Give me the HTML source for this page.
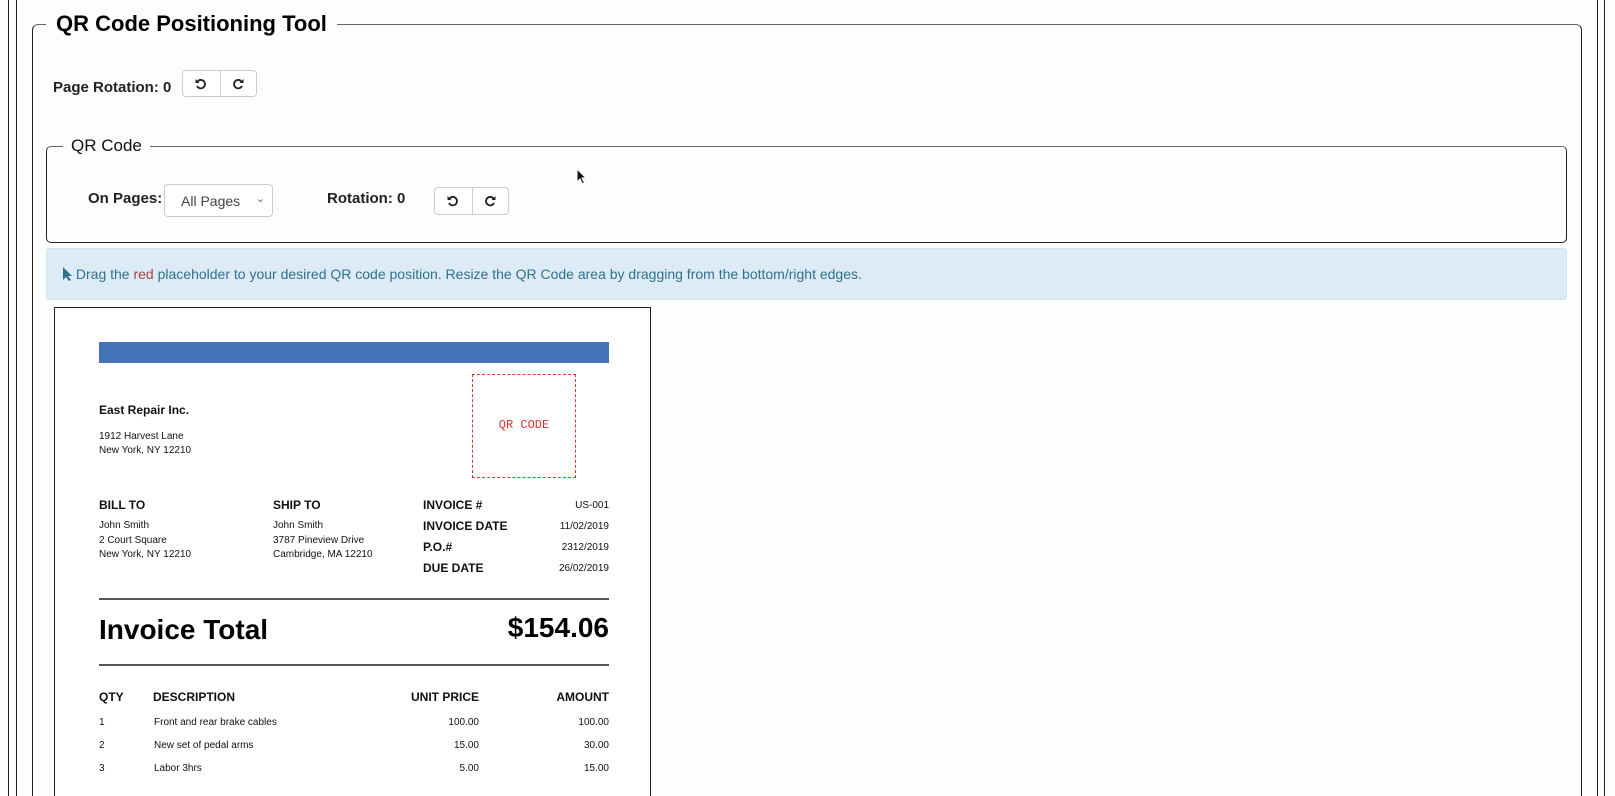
<!DOCTYPE html>
<html><head><meta charset="utf-8"><style>
*{box-sizing:border-box;margin:0;padding:0}
html,body{width:1615px;height:796px;overflow:hidden}
body{background:#fdfdfc;font-family:"Liberation Sans",Arial,sans-serif;color:#000}
#w{position:relative;width:1615px;height:796px;overflow:hidden}
.a{position:absolute}
.vl{position:absolute;top:0;height:796px;width:1px;background:#222}
.btns{position:absolute;display:flex;border:1px solid #ccc;border-radius:4px;background:#fff;overflow:hidden}
.btns div{width:37px;height:100%;display:flex;align-items:center;justify-content:center}
.btns div+div{border-left:1px solid #ccc}
.inv{font-size:10px;color:#111}
.b{font-weight:bold}
.r{text-align:right}
</style></head><body><div id="w">
<div class="vl" style="left:8px"></div><div class="vl" style="left:16px"></div>
<div class="vl" style="left:1597px"></div><div class="vl" style="left:1604px"></div>

<div class="a" style="left:32px;top:24px;width:1550px;height:772px;border:1px solid #222;border-bottom:none;border-top-color:#666;border-radius:6px 6px 0 0"></div>
<div class="a b" style="left:46px;top:10px;background:#fdfdfc;padding:0 10px;font-size:22px;line-height:28px">QR Code Positioning Tool</div>

<div class="a b" style="left:53px;top:79px;font-size:15px;color:#222">Page Rotation: 0</div>
<div class="btns" style="left:182px;top:70px;width:75px;height:27px">
<div><svg width="14" height="14" viewBox="0 0 14 14"><path d="M3.5 4.5A4.2 4.2 0 1 1 3 9" fill="none" stroke="#222" stroke-width="1.8"/><path d="M1.5 2v4h4z" fill="#222"/></svg></div>
<div><svg width="14" height="14" viewBox="0 0 14 14"><path d="M10.5 4.5A4.2 4.2 0 1 0 11 9" fill="none" stroke="#222" stroke-width="1.8"/><path d="M12.5 2v4h-4z" fill="#222"/></svg></div>
</div>

<div class="a" style="left:46px;top:146px;width:1521px;height:97px;border:1px solid #222;border-top-color:#666;border-radius:5px"></div>
<div class="a" style="left:63px;top:135px;background:#fdfdfc;padding:0 8px;font-size:17px;line-height:22px;color:#111">QR Code</div>
<div class="a b" style="left:88px;top:190px;font-size:15px;color:#222">On Pages:</div>
<div class="a" style="left:164px;top:184px;width:109px;height:33px;border:1px solid #ccc;border-radius:4px;background:#fff;font-size:14px;color:#444;padding:8px 0 0 16px">All Pages<span style="position:absolute;right:7px;top:7px;font-size:11px;color:#666">&#8964;</span></div>
<div class="a b" style="left:327px;top:190px;font-size:15px;color:#222">Rotation: 0</div>
<div class="btns" style="left:434px;top:187px;width:75px;height:28px">
<div><svg width="14" height="14" viewBox="0 0 14 14"><path d="M3.5 4.5A4.2 4.2 0 1 1 3 9" fill="none" stroke="#222" stroke-width="1.8"/><path d="M1.5 2v4h4z" fill="#222"/></svg></div>
<div><svg width="14" height="14" viewBox="0 0 14 14"><path d="M10.5 4.5A4.2 4.2 0 1 0 11 9" fill="none" stroke="#222" stroke-width="1.8"/><path d="M12.5 2v4h-4z" fill="#222"/></svg></div>
</div>
<svg class="a" style="left:576px;top:168px" width="12" height="18" viewBox="0 0 12 18"><path d="M1 1v13l3-3 2.5 5 2-1-2.5-5h4z" fill="#111" stroke="#fff" stroke-width="1"/></svg>

<div class="a" style="left:46px;top:248px;width:1521px;height:52px;background:#dcebf5;border:1px solid #cde6f0;border-radius:3px;font-size:14px;color:#31708f;padding:17px 0 0 15px">
<svg width="10" height="14" viewBox="0 0 10 14" style="vertical-align:-2px"><path d="M1 0v13l3-3 3 4 2-1-3-4h4z" fill="#31708f"/></svg> Drag the <span style="color:#a94442">red</span> placeholder to your desired QR code position. Resize the QR Code area by dragging from the bottom/right edges.</div>

<div class="a" style="left:54px;top:307px;width:597px;height:489px;border:1px solid #222;border-bottom:none;background:#fff"></div>
<div class="a" style="left:99px;top:342px;width:510px;height:21px;background:#4472b4"></div>
<div class="a" style="left:472px;top:374px;width:104px;height:104px;border:1px dashed #d33"></div>
<div class="a" style="left:472px;top:418px;width:104px;text-align:center;font-family:'Liberation Mono',monospace;font-size:12px;color:#d33">QR CODE</div>

<div class="a inv b" style="left:99px;top:403px;font-size:12px">East Repair Inc.</div>
<div class="a inv" style="left:99px;top:430px;line-height:14px">1912 Harvest Lane<br>New York, NY 12210</div>

<div class="a inv b" style="left:99px;top:498px;font-size:12px">BILL TO</div>
<div class="a inv" style="left:99px;top:519px;line-height:14.5px">John Smith<br>2 Court Square<br>New York, NY 12210</div>
<div class="a inv b" style="left:273px;top:498px;font-size:12px">SHIP TO</div>
<div class="a inv" style="left:273px;top:519px;line-height:14.5px">John Smith<br>3787 Pineview Drive<br>Cambridge, MA 12210</div>
<div class="a inv b" style="left:423px;top:495px;font-size:12px;line-height:21px">INVOICE #<br>INVOICE DATE<br>P.O.#<br>DUE DATE</div>
<div class="a inv r" style="left:509px;width:100px;top:495px;line-height:21px">US-001<br>11/02/2019<br>2312/2019<br>26/02/2019</div>

<div class="a" style="left:99px;top:598px;width:510px;height:2px;background:#555"></div>
<div class="a b" style="left:99px;top:614px;font-size:28px">Invoice Total</div>
<div class="a b r" style="left:409px;width:200px;top:612px;font-size:28px">$154.06</div>
<div class="a" style="left:99px;top:664px;width:510px;height:2px;background:#555"></div>

<div class="a inv b" style="left:99px;top:690px;font-size:12px">QTY</div>
<div class="a inv b" style="left:153px;top:690px;font-size:12px">DESCRIPTION</div>
<div class="a inv b r" style="left:379px;width:100px;top:690px;font-size:12px">UNIT PRICE</div>
<div class="a inv b r" style="left:509px;width:100px;top:690px;font-size:12px">AMOUNT</div>
<div class="a inv" style="left:99px;top:711px;line-height:23px">1<br>2<br>3</div>
<div class="a inv" style="left:154px;top:711px;line-height:23px">Front and rear brake cables<br>New set of pedal arms<br>Labor 3hrs</div>
<div class="a inv r" style="left:379px;width:100px;top:711px;line-height:23px">100.00<br>15.00<br>5.00</div>
<div class="a inv r" style="left:509px;width:100px;top:711px;line-height:23px">100.00<br>30.00<br>15.00</div>
</div></body></html>
